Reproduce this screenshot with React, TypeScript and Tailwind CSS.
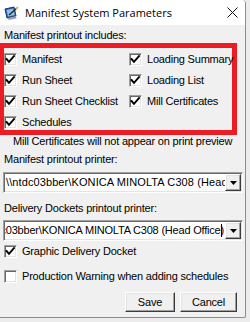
import React from "react";

const sunken =
  "border border-t-[#a0a0a0] border-l-[#a0a0a0] border-b-white border-r-white shadow-[inset_1px_1px_0_#696969,inset_-1px_-1px_0_#e3e3e3]";
const raised =
  "border border-t-white border-l-white border-b-[#3c3c3c] border-r-[#3c3c3c] shadow-[inset_-1px_-1px_0_#a0a0a0,inset_1px_1px_0_#e3e3e3]";

function Check({ checked }: { checked: boolean }) {
  return (
    <div className={`w-[13px] h-[13px] bg-white shrink-0 ${sunken}`}>
      {checked && (
        <svg width="11" height="11" viewBox="0 0 11 11" className="block">
          <polyline points="1.5,5 4,7.8 9,2.2" fill="none" stroke="#000" strokeWidth="1.9" strokeLinecap="square" />
        </svg>
      )}
    </div>
  );
}

function Row({ label, checked }: { label: string; checked: boolean }) {
  return (
    <div className="flex items-center h-[13px] gap-[5px]">
      <Check checked={checked} />
      <span className="leading-[13px] whitespace-nowrap">{label}</span>
    </div>
  );
}

function Combo({ text, caret, end }: { text: string; caret?: boolean; end?: boolean }) {
  return (
    <div className={`ml-[3px] w-[240px] h-[21px] bg-white flex items-stretch ${sunken} p-[1px]`}>
      <div
        className={`flex-1 overflow-hidden flex items-center pl-[1px] ${
          end ? "justify-end pr-[3px] tracking-[-0.2px]" : "justify-start pr-[2px] tracking-[0.1px]"
        }`}
      >
        <span className={`whitespace-nowrap leading-[13px] ${end ? "-mr-[3px]" : ""}`}>{text}</span>
        {caret && <span className="w-[1px] h-[13px] bg-black shrink-0" />}
      </div>
      <div className={`w-[16px] bg-[#f0f0f0] flex items-center justify-center ${raised}`}>
        <svg width="7" height="4" viewBox="0 0 7 4" className="block">
          <polygon points="0,0 7,0 3.5,4" fill="#000" />
        </svg>
      </div>
    </div>
  );
}

export default function App() {
  return (
    <div className="w-[250px] h-[322px] bg-[#ececec] overflow-hidden font-['Liberation_Sans',Arial,sans-serif] text-[11px] tracking-[-0.2px] text-black">
      <div className="w-[246px] h-[318px] bg-[#f0f0f0] border-r border-b border-[#8c8c8c] rounded-tr-[4px] rounded-br-[2px] flex flex-col overflow-hidden">
        {/* Title bar */}
        <div className="h-[25px] bg-white flex items-center shrink-0">
          <svg width="16" height="16" viewBox="0 0 16 16" className="ml-[3px]">
            <path d="M2 4 L11 2 L13 11 L4 13 Z" fill="#2a5fb0" stroke="#16366e" strokeWidth="1" />
            <path d="M3.6 5 L10.3 3.5 L11.8 10 L5 11.6 Z" fill="#8ec3f0" />
            <path d="M5 13 L13 11 L13.5 13.5 L5.5 15 Z" fill="#9aa3ad" />
            <line x1="6" y1="10" x2="14" y2="3" stroke="#3a2a10" strokeWidth="1.6" />
            <line x1="13" y1="3.8" x2="15" y2="2" stroke="#e0b040" strokeWidth="1.6" />
          </svg>
          <span className="ml-[6px] font-['Open_Sans',sans-serif] text-[11px] tracking-[0px] leading-[14px] whitespace-nowrap">
            Manifest System Parameters
          </span>
          <div className="flex-1" />
          <svg width="11" height="11" viewBox="0 0 11 11" className="mr-[7px]">
            <line x1="0.5" y1="0.5" x2="10.5" y2="10.5" stroke="#111" strokeWidth="1" />
            <line x1="10.5" y1="0.5" x2="0.5" y2="10.5" stroke="#111" strokeWidth="1" />
          </svg>
        </div>

        {/* Body */}
        <div className="flex flex-col">
          <div className="mt-[4px] ml-[4px] leading-[13px] whitespace-nowrap">Manifest printout includes:</div>

          <div className="mt-[1px] w-[237px] h-[92px] border-[5px] border-l-[4px] border-[#ed1c24] pt-[5px]">
            <div className="grid grid-cols-[125px_1fr] gap-y-[8px]">
              <Row label="Manifest" checked />
              <Row label="Loading Summary" checked />
              <Row label="Run Sheet" checked />
              <Row label="Loading List" checked />
              <Row label="Run Sheet Checklist" checked />
              <Row label="Mill Certificates" checked />
              <Row label="Schedules" checked />
            </div>
          </div>

          <div className="ml-[13px] leading-[13px] whitespace-nowrap">Mill Certificates will not appear on print preview</div>

          <div className="mt-[5px] ml-[4px] leading-[13px] whitespace-nowrap">Manifest printout printer:</div>
          <div className="mt-[6px]">
            <Combo text={"\\\\ntdc03bber\\KONICA MINOLTA C308 (Head Office)"} />
          </div>

          <div className="mt-[9px] ml-[4px] leading-[13px] whitespace-nowrap">Delivery Dockets printout printer:</div>
          <div className="mt-[5px]">
            <Combo text={"\\\\ntdc03bber\\KONICA MINOLTA C308 (Head Office)"} caret end />
          </div>

          <div className="mt-[4px] ml-[4px]">
            <Row label="Graphic Delivery Docket" checked />
          </div>
          <div className="mt-[12px] ml-[4px]">
            <Row label="Production Warning when adding schedules" checked={false} />
          </div>

          <div className="mt-[9px] flex justify-end gap-[5px] pr-[8px]">
            <button className={`w-[50px] h-[20px] bg-[#f0f0f0] leading-[13px] ${raised}`}>Save</button>
            <button className={`w-[57px] h-[20px] bg-[#f0f0f0] leading-[13px] ${raised}`}>Cancel</button>
          </div>
        </div>
      </div>
    </div>
  );
}
